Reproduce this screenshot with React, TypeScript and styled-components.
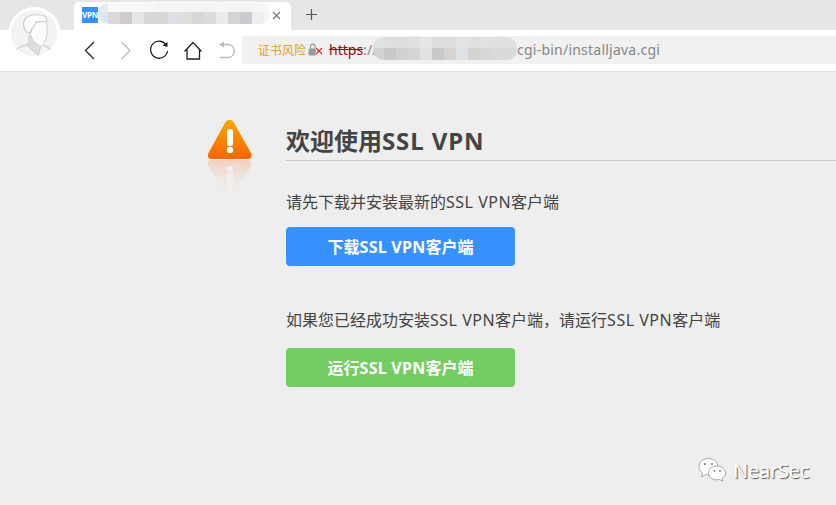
import React from 'react';
import styled, { createGlobalStyle } from 'styled-components';

const Global = createGlobalStyle`
  * { box-sizing: border-box; }
  body { margin: 0; background: #eee; overflow: hidden; }
`;

const Page = styled.div`
  position: relative;
  height: 505px;
  overflow: hidden;
  background: #eeeeee;
  color: #444;
  font-family: "Noto Sans", "Noto Sans CJK SC", sans-serif;
`;

const TabStrip = styled.div`
  display: flex;
  height: 30px;
  padding: 2px 0 0 74px;
  background: #e6e6e6;
`;

const Tab = styled.div`
  display: flex;
  align-items: flex-start;
  width: 217px;
  height: 28px;
  padding: 5px 0 0 8px;
  border-radius: 5px 5px 0 0;
  background: #fff;
`;

const Favicon = styled.div`
  display: flex;
  flex: none;
  justify-content: center;
  width: 16px;
  height: 16px;
  overflow: hidden;
  background: #3792ff;
  color: #fff;
  font: 700 8px/16px "Noto Sans", sans-serif;
  letter-spacing: -0.2px;
`;

const Mosaic = styled.div<{ $radius: string; $first: number; $cols: number; $rows: string; $w: number; $lift: number }>`
  display: grid;
  flex: none;
  grid-template-columns: ${(p) => p.$first}px repeat(${(p) => p.$cols}, 12px);
  grid-template-rows: ${(p) => p.$rows};
  width: ${(p) => p.$w}px;
  margin-top: ${(p) => -p.$lift}px;
  overflow: hidden;
  border-radius: ${(p) => p.$radius};
`;

const Cell = styled.span<{ $c: string }>`
  background: ${(p) => p.$c};
`;

const TabClose = styled.svg`
  flex: none;
  margin: 4px 0 0 2px;
`;

const NewTab = styled.svg`
  margin: 6px 0 0 14px;
`;

const Toolbar = styled.div`
  display: flex;
  align-items: center;
  height: 42px;
  padding: 0 0 2px 83px;
  border-bottom: 1px solid #e2e2e2;
  background: #fff;
`;

const NavIcons = styled.svg`
  flex: none;
`;

const Address = styled.div`
  display: flex;
  flex: 1;
  align-items: center;
  height: 28px;
  padding-left: 16px;
  border-radius: 2px 0 0 2px;
  background: #f1f1f1;
  white-space: nowrap;
`;

const Risk = styled.span`
  color: #e6a11c;
  font: 12px/16px "Noto Sans CJK SC", sans-serif;
`;

const Url = styled.span<{ $w: number }>`
  width: ${(p) => p.$w}px;
  color: #858585;
  font: 14px/20px "Noto Sans", sans-serif;
  letter-spacing: 0.23px;
`;

const Insecure = styled.span`
  color: #8c1010;
  letter-spacing: 0;
  text-decoration: line-through;
`;

const Avatar = styled.svg`
  position: absolute;
  left: 8px;
  top: 6px;
`;

const Content = styled.main`
  display: flex;
  padding: 47px 0 0 206px;
`;

const Body = styled.div`
  flex: 1;
  margin-left: 32px;
`;

const Title = styled.h1`
  height: 42px;
  margin: 0;
  padding-top: 4px;
  border-bottom: 1px solid #c8c8c8;
  font-size: 24px;
  font-weight: 700;
  line-height: 36px;
`;

const Text = styled.p<{ $top: number }>`
  height: 24px;
  margin: ${(p) => p.$top}px 0 0;
  font-size: 16px;
  line-height: 24px;
  white-space: nowrap;
`;

const Latin = styled.span<{ $spacing: number }>`
  letter-spacing: ${(p) => p.$spacing}px;
`;

const Button = styled.button<{ $bg: string; $top: number }>`
  display: block;
  width: 229px;
  height: 39px;
  margin: ${(p) => p.$top}px 0 0;
  padding: 2px 0 0;
  border: 0;
  border-radius: 4px;
  background: ${(p) => p.$bg};
  color: #fff;
  font: 700 16px/37px "Noto Sans", "Noto Sans CJK SC", sans-serif;
`;

const Watermark = styled.div`
  position: absolute;
  left: 697px;
  top: 456px;
  display: flex;
  align-items: center;
  color: #fff;
  font: 20px/30px "Noto Sans", sans-serif;
  letter-spacing: -0.25px;
  text-shadow: 1px 1px 1px #555;
`;

const tabCells = [
  '#e6ebf4', '#fafafa', '#f8f8f8', '#f8f8f8', '#f7f7f7', '#f4f4f4', '#f4f4f5', '#f4f5f3', '#f4f4f4', '#f3f4f4', '#f6f6f6', '#f4f4f4', '#f4f4f5', '#f6f6f6', '#fafafa',
  '#dfe6f2', '#dad9d7', '#cfcccb', '#e6e6e6', '#dad8d7', '#d9d8d8', '#dedfe6', '#dedfdc', '#d9d8d7', '#dbdddc', '#ebeae9', '#d5d4d3', '#cbcace', '#eeeeee', '#f6f6f6',
];
const urlCells = [
  '#dfe3e3', '#dfdfdf', '#dedede', '#e0e0e0', '#e6e6e6', '#dedede', '#dedede', '#e1e4e6', '#dfdfdf', '#e0e1e1', '#e0e0e0', '#e0e0e0', '#e0e0e0',
  '#d3d3d3', '#c9c8ca', '#d2d1d1', '#d5d5d8', '#e2e1e2', '#cbc8c8', '#d6d3d3', '#dee1e5', '#d5d2d2', '#d8d6d6', '#dadada', '#dadada', '#dadada',
];

export default function App() {
  return (
    <Page>
      <Global />
      <TabStrip>
        <Tab>
          <Favicon>VPN</Favicon>
          <Mosaic $first={10} $cols={14} $rows="9px 12px" $w={172} $lift={4} $radius="10px">
            {tabCells.map((c, i) => <Cell key={i} $c={c} />)}
          </Mosaic>
          <TabClose width="9" height="9" stroke="#777" strokeWidth="1.2"><path d="M1 1l7 7M8 1l-7 7" /></TabClose>
        </Tab>
        <NewTab width="13" height="13" stroke="#555" strokeWidth="1.2"><path d="M6.5 1v11M1 6.5h11" /></NewTab>
      </TabStrip>
      <Toolbar>
        <NavIcons width="159" height="28" viewBox="83 36 159 28" fill="none" stroke="#222" strokeWidth="1.3">
          <path d="M94 42l-8.5 8.5L94 59" />
          <path d="M121.500 42l8.500 8.500-8.500 8.500" stroke="#bbb" />
          <path d="M166.500 45.500A8.500 8.500 0 1 0 167.500 51" />
          <path d="M162.500 45.500l5-3.500v5z" fill="#222" stroke="none" />
          <path d="M184.500 51.500l8.500-9 8.500 9M187 49.500v9.500h12.500v-9.500" />
          <path d="M222 44.500h6a6.300 6.300 0 1 1 0 13h-8" stroke="#bbb" />
          <path d="M219 44.500l5-3v6z" fill="#bbb" stroke="none" />
        </NavIcons>
        <Address>
          <Risk>证书风险</Risk>
          <svg width="23" height="16" viewBox="0 0 23 16" fill="none">
            <path d="M4.500 7V4.500a2.300 2.300 0 0 1 4.600 0V7" stroke="#999" strokeWidth="1.200" />
            <rect x="2.500" y="6.500" width="7.500" height="7" rx="1.500" fill="#999" />
            <path d="M10 6l6 6M16 6l-6 6" stroke="#fff" strokeWidth="3" />
            <path d="M10 6l6 6M16 6l-6 6" stroke="#d8222b" strokeWidth="1.300" />
          </svg>
          <Url $w={44}><Insecure>https</Insecure>://</Url>
          <Mosaic $first={11} $cols={12} $rows="11px 12px" $w={144} $lift={3} $radius="10px">
            {urlCells.map((c, i) => <Cell key={i} $c={c} />)}
          </Mosaic>
          <Url $w={150}>cgi-bin/installjava.cgi</Url>
        </Address>
      </Toolbar>
      <Avatar width="54" height="54" viewBox="8 6 54 54">
        <circle cx="34.500" cy="33" r="26" fill="#fff" />
        <circle cx="34" cy="33" r="23" fill="#f3f3f3" />
        <path d="M16.500 50c3-3.500 7-4 11-5.500M43.500 45c3 1.500 5 2 7 4.500" fill="none" stroke="#d2d2d2" strokeWidth="1.300" />
        <path d="M29 35v7l-2 3 11 10.500 3-9.500z" fill="#dedede" stroke="#cdcdcd" />
        <path d="M46 21c1 4 1.500 7 1 12-.5 6-3 11-6 13.500-4-1-9-6-11-13l5-11z" fill="#fbfbfb" stroke="#d0d0d0" />
        <path d="M26 31.500c-3-4-3.500-10 0-13.500 4-4 10-3.500 14-3 4.500 0 7 2.500 7 6.500-3 1-7-.5-11 .5-1.500 4-2 6-4.500 7l-1 4z" fill="#fdfdfd" stroke="#cacaca" strokeWidth="1.200" />
      </Avatar>
      <Content>
        <svg width="48" height="80" viewBox="206 119 48 80">
          <defs>
            <linearGradient id="warm" x1="0" y1="0" x2="0" y2="1">
              <stop offset="0" stopColor="#faa700" /><stop offset="1" stopColor="#fb6400" />
            </linearGradient>
            <linearGradient id="fade" x1="0" y1="1" x2="0" y2="0">
              <stop offset="0" stopColor="#f3a878" stopOpacity=".42" /><stop offset=".95" stopColor="#eeeeee" stopOpacity="0" />
            </linearGradient>
          </defs>
          <path d="M225.500 122q4-4.500 8 0l17.500 31q2 5.500-3 6h-36.500q-5-.5-3-6z" fill="url(#warm)" />
          <rect x="227" y="129" width="6" height="17" rx="2.500" fill="#fff" />
          <circle cx="230" cy="150" r="3.200" fill="#fff" />
          <g transform="translate(0 319) scale(1 -1)">
            <path d="M225.500 122q4-4.500 8 0l17.500 31q2 5.500-3 6h-36.500q-5-.5-3-6z" fill="url(#fade)" />
            <rect x="227" y="129" width="6" height="17" rx="2.500" fill="#f1eeec" />
            <circle cx="230" cy="150" r="3.200" fill="#f3eeeb" />
          </g>
        </svg>
        <Body>
          <Title>欢迎使用<Latin $spacing={0.9}>SSL VPN</Latin></Title>
          <Text $top={29}>请先下载并安装最新的<Latin $spacing={0.5}>SSL VPN</Latin>客户端</Text>
          <Button $bg="#3792ff" $top={13}>下载<Latin $spacing={0.25}>SSL VPN</Latin>客户端</Button>
          <Text $top={42}>如果您已经成功安装<Latin $spacing={0.5}>SSL VPN</Latin>客户端，请运行<Latin $spacing={0.5}>SSL VPN</Latin>客户端</Text>
          <Button $bg="#74cd62" $top={16}>运行<Latin $spacing={0.25}>SSL VPN</Latin>客户端</Button>
        </Body>
      </Content>
      <Watermark>
        <svg width="36" height="30" viewBox="0 0 36 30" fill="#fff" stroke="#888" strokeWidth=".7">
          <path d="M11.500 2.500c6 0 9.500 4 9.500 8.500s-4 8-9.500 8l-3-.5-4 2.500 1-4C-1 12 2 2.500 11.500 2.500z" />
          <path d="M20 10c5 0 8.500 3.500 8.500 7 0 2.500-1.500 4.500-3.500 5.500l.5 2.500-3-1.500C16 25 11.500 21 11.500 17s3.500-7 8.500-7z" />
          <g fill="#777" stroke="none"><circle cx="8" cy="8" r="1" /><circle cx="15" cy="8" r="1" /><circle cx="17.500" cy="15" r=".9" /><circle cx="23" cy="15" r=".9" /></g>
        </svg>
        NearSec
      </Watermark>
    </Page>
  );
}
